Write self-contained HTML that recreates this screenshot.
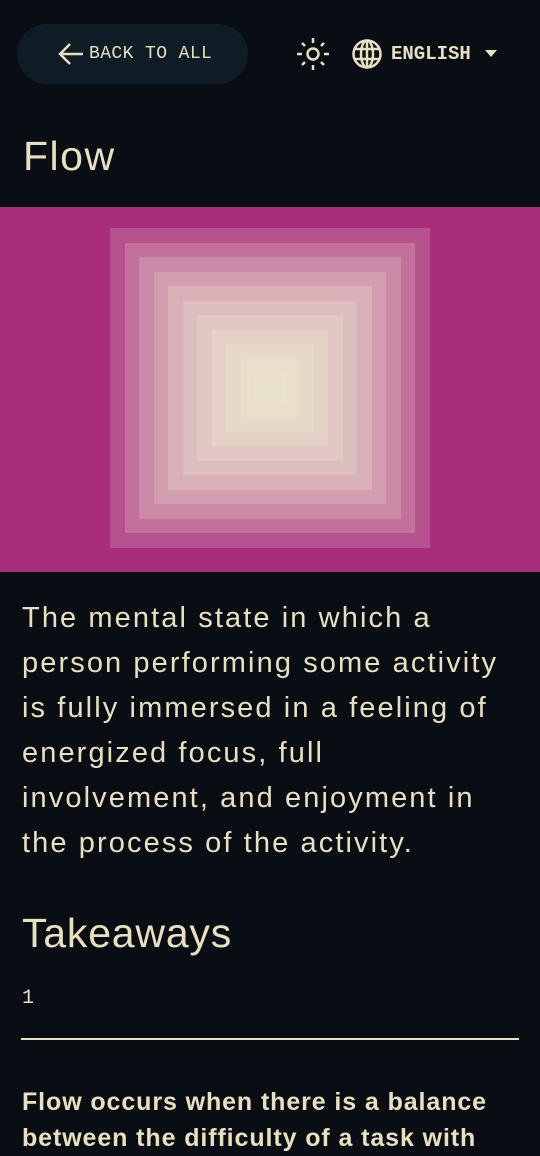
<!DOCTYPE html>
<html><head><meta charset="utf-8"><style>
*{margin:0;padding:0;box-sizing:border-box}
body{width:540px;height:1149px;overflow:hidden;background:#080e14;color:#e8e0bf;font-family:"Liberation Sans",sans-serif;position:relative}
.a{position:absolute;white-space:nowrap}
.mono{font-family:"Liberation Mono",monospace}
.sq{position:absolute}
</style></head><body>
<div class="a" style="left:17px;top:24px;width:231px;height:60px;border-radius:30px;background:#0d1c25"></div>
<svg class="a" style="left:57px;top:41px" width="28" height="26" viewBox="0 0 28 26"><path d="M13 3 L3 13 L13 23 M3 13 H26" stroke="#e8e0bf" stroke-width="2.5" fill="none"/></svg>
<div class="a mono" style="left:89px;top:44px;font-size:18px;letter-spacing:0.4px">BACK TO ALL</div>
<svg class="a" style="left:296px;top:37px" width="34" height="34" viewBox="0 0 34 34" stroke="#e8e0bf" stroke-width="2.5" fill="none"><circle cx="17" cy="17" r="5.5"/><path d="M17 1v5M17 28v5M1 17h5M28 17h5M6 6l3 3M25 25l3 3M28 6l-3 3M6 28l3-3"/></svg>
<svg class="a" style="left:351px;top:38px" width="32" height="32" viewBox="0 0 32 32" stroke="#e8e0bf" stroke-width="2.5" fill="none"><circle cx="16" cy="16" r="13.5"/><ellipse cx="16" cy="16" rx="6" ry="13.5"/><path d="M3 11h26M3 21h26M16 2.5v27"/></svg>
<div class="a mono" style="left:391px;top:43px;font-size:19px;font-weight:bold">ENGLISH</div>
<svg class="a" style="left:485px;top:50px" width="12" height="8"><path d="M0 0H12L6 7Z" fill="#e8e0bf"/></svg>
<div class="a" style="left:23px;top:133px;font-size:41px;letter-spacing:1.5px">Flow</div>
<div class="a" style="left:0;top:207px;width:540px;height:365px;background:#a82e7b"></div>
<div class="sq" style="left:110px;top:228px;width:320px;height:320px;background:#b6538f"></div>
<div class="sq" style="left:125px;top:243px;width:290px;height:290px;background:#c1719a"></div>
<div class="sq" style="left:139px;top:257px;width:262px;height:262px;background:#ca8aa6"></div>
<div class="sq" style="left:154px;top:272px;width:232px;height:232px;background:#d29eb0"></div>
<div class="sq" style="left:168px;top:286px;width:204px;height:204px;background:#d8b0b8"></div>
<div class="sq" style="left:183px;top:301px;width:174px;height:174px;background:#ddbebe"></div>
<div class="sq" style="left:197px;top:315px;width:146px;height:146px;background:#e1c8c2"></div>
<div class="sq" style="left:212px;top:330px;width:116px;height:116px;background:#e4d2c6"></div>
<div class="sq" style="left:226px;top:344px;width:88px;height:88px;background:#e7d9c8"></div>
<div class="sq" style="left:241px;top:359px;width:58px;height:58px;background:#e9dfcb"></div>
<div class="sq" style="left:255px;top:373px;width:30px;height:30px;background:#ebe2ce"></div>
<div class="a" style="left:22px;top:596px;font-size:29px;line-height:45px;letter-spacing:2.1px">The mental state in which a<br>person performing some activity<br>is fully immersed in a feeling of<br>energized focus, full<br>involvement, and enjoyment in<br>the process of the activity.</div>
<div class="a" style="left:22px;top:910px;font-size:41px;letter-spacing:0.8px">Takeaways</div>
<div class="a mono" style="left:22px;top:987px;font-size:20px">1</div>
<div class="a" style="left:21px;top:1038px;width:498px;height:2px;background:#e8e0bf"></div>
<div class="a" style="left:22px;top:1084px;font-size:25px;line-height:36px;font-weight:bold;letter-spacing:0.9px">Flow occurs when there is a balance<br>between the difficulty of a task with</div>
</body></html>
